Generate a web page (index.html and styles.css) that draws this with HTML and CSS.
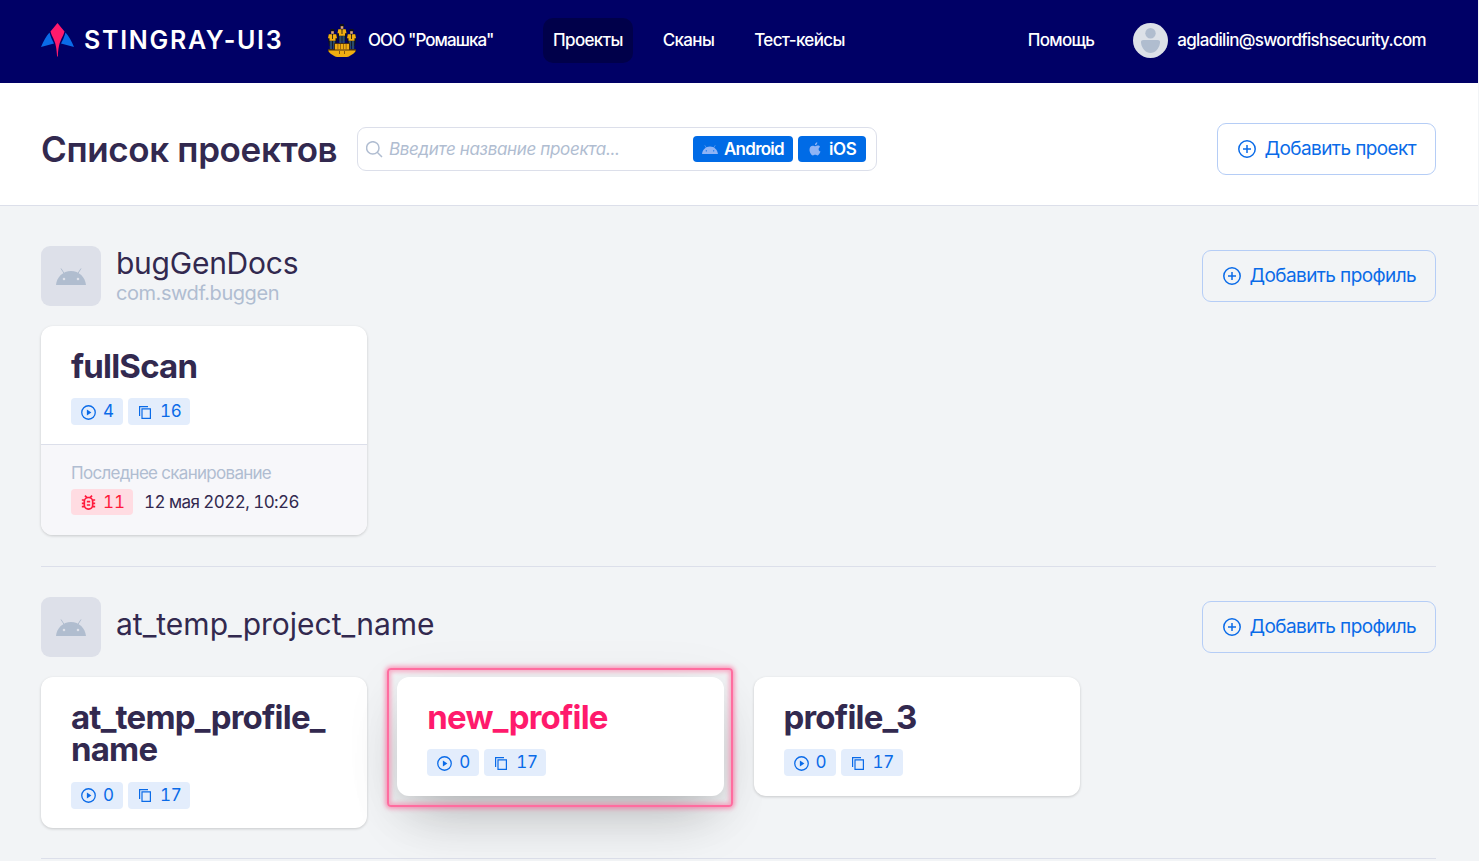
FILE: index.html
```html
<!DOCTYPE html>
<html lang="ru">
<head>
<meta charset="utf-8">
<title>Stingray — Проекты</title>
<link rel="stylesheet" href="styles.css">
</head>
<body>
<svg class="sprite" aria-hidden="true">
  <symbol id="droid" viewBox="0 0 30 17">
    <path d="M5 .5 8.500 6M25 .5 21.500 6" stroke="currentColor" stroke-width="1" fill="none"/>
    <path fill="currentColor" fill-rule="evenodd" d="M0 17C.6 9.300 7 3 15 3s14.400 6.300 15 14ZM8 9.700a1.300 1.300 0 1 0 0 2.600 1.300 1.300 0 0 0 0-2.600Zm14 0a1.300 1.300 0 1 0 0 2.600 1.300 1.300 0 0 0 0-2.600Z"/>
  </symbol>
  <symbol id="plus" viewBox="0 0 18 18">
    <path d="M9 5v8M5 9h8" stroke="currentColor" stroke-width="1.500" fill="none"/>
    <circle cx="9" cy="9" r="8.200" stroke="currentColor" stroke-width="1.500" fill="none"/>
  </symbol>
  <symbol id="play" viewBox="0 0 14 14">
    <circle cx="7" cy="7" r="6.300" stroke="currentColor" stroke-width="1.200" fill="none"/>
    <path d="M5.500 4.200v5.600L9.700 7Z" fill="currentColor"/>
  </symbol>
  <symbol id="copy" viewBox="0 0 12 13">
    <path d="M.6 10V.6H9M3 2.900h8.400v9.500H3Z" stroke="currentColor" stroke-width="1.200" fill="none"/>
  </symbol>
  <symbol id="bug" viewBox="3 3 18 18">
    <path fill="currentColor" d="M20 8h-2.810c-.45-.78-1.070-1.450-1.820-1.960L17 4.410 15.590 3l-2.170 2.170a6 6 0 0 0-2.830 0L8.410 3 7 4.410l1.620 1.630C7.880 6.550 7.260 7.220 6.810 8H4v2h2.090c-.05.33-.09.66-.09 1v1H4v2h2v1c0 .34.04.67.09 1H4v2h2.810a6 6 0 0 0 10.380 0H20v-2h-2.090c.05-.33.09-.66.09-1v-1h2v-2h-2v-1c0-.34-.04-.67-.09-1H20V8Zm-4 4v3a4 4 0 0 1-8 0v-4a4 4 0 0 1 8 0v1Zm-6 2h4v2h-4v-2Zm0-4h4v2h-4v-2Z"/>
  </symbol>
</svg>

<header class="topbar">
  <a class="brand">
    <svg width="33" height="34" viewBox="0 0 33 34">
      <path fill="#ff1a6c" d="M16.500 0 23.500 8.500C21.500 16 17.500 17 16.900 33.500h-.8C15.500 17 11.500 16 9.500 8.500Z"/>
      <path fill="#0a6be8" d="M8.500 9.500C10 15 11.500 17.500 13 20.500L0 24C2.500 18 5 13.500 8.500 9.500ZM24.500 9.500C23 15 21.500 17.500 20 20.500L33 24C30.500 18 28 13.500 24.500 9.500Z"/>
    </svg>
    <span class="brand-name">STINGRAY-UI3</span>
  </a>
  <a class="company">
    <svg width="28" height="33" viewBox="0 0 28 33">
      <defs><g id="worker">
        <path fill="#101018" d="M2.500 0h4v3.500h-4ZM.5 5h8L9 9.500 8 17H1L0 9.500Z"/>
        <path fill="#e0a878" d="M3.200 2.200h2.600v2.600H3.200Z"/>
        <path fill="#f2ad12" d="M.8 5.200h3l.7 1.200.7-1.200h3L9 9.300H7.500v2.500h-6V9.300H0Z"/>
        <path fill="#101018" d="M4.100 6h.8v4h-.8Z"/>
        <path fill="#2b4a68" d="M1.800 12h2.300v9H1.800ZM4.900 12h2.300v9H4.900Z"/>
      </g></defs>
      <use href="#worker" x="0" y="5"/><use href="#worker" x="19" y="5"/><use href="#worker" x="9.500"/>
      <path fill="#4a3010" d="M6 19h16v6h6v3H0v-3h6Z"/>
      <path fill="#f0ae12" d="M7 20h14v5.500H7ZM.5 26.500h27c-.5 3-4 4-6.500 6L19 33H9l-2-.5c-2.500-2-6-3-6.500-6Z"/>
      <path fill="#8a5710" d="M9.500 20h.8v5.500h-.8ZM12 20h.8v5.500H12ZM15.200 20h.8v5.500h-.8ZM17.700 20h.8v5.500h-.8ZM11 27h1v3h-1ZM16 27h1v3h-1Z"/>
    </svg>
    <span class="company-name">ООО "Ромашка"</span>
  </a>
  <nav class="menu">
    <a class="active">Проекты</a><a>Сканы</a><a>Тест-кейсы</a>
  </nav>
  <a class="help">Помощь</a>
  <a class="user">
    <svg width="35" height="35" viewBox="0 0 35 35">
      <circle cx="17.500" cy="17.500" r="17.500" fill="#dce1e8"/>
      <circle cx="17.500" cy="10.300" r="5.200" fill="#b0bdcf"/>
      <path fill="#b0bdcf" d="M10.500 17h14q3 0 2.500 3c-1 6-5 10-9.500 10S9 26 8 20q-.5-3 2.500-3Z"/>
    </svg>
    <span>agladilin@swordfishsecurity.com</span>
  </a>
</header>

<section class="toolbar">
  <h1>Список проектов</h1>
  <div class="search">
    <svg width="17" height="17" viewBox="0 0 17 17"><path d="M11.700 11.700 16 16M13 6.900a6.200 6.200 0 1 1-12.400 0 6.200 6.200 0 0 1 12.400 0Z" fill="none" stroke="#b0bdd1" stroke-width="1.500"/></svg>
    <span class="placeholder">Введите название проекта...</span>
    <span class="chip android"><svg width="16" height="9"><use href="#droid"/></svg><span>Android</span></span>
    <span class="chip ios"><svg width="12" height="14" viewBox="0 0 12 14"><path fill="currentColor" d="M8.300.3C8.400 2 7.200 3.300 5.900 3.300 5.800 1.800 7 .5 8.300.3ZM11 4.900c-2 1.200-1.700 3.800.5 4.700-.6 1.700-1.800 3.800-3 3.800-.9 0-1.200-.6-2.300-.6s-1.500.6-2.300.6C2.400 13.400.5 10.400.5 7.700c0-2.600 1.500-4 3.200-4 1.100 0 1.800.6 2.600.6.7 0 1.600-.7 2.800-.7.800 0 1.500.4 1.900 1.300Z"/></svg><span>iOS</span></span>
  </div>
  <button class="btn"><svg width="18" height="18"><use href="#plus"/></svg><span>Добавить проект</span></button>
</section>

<main>
  <section class="project">
    <div class="project-head">
      <span class="tile"><svg width="30" height="17"><use href="#droid"/></svg></span>
      <div class="names"><h2 class="tight">bugGenDocs</h2><p>com.swdf.buggen</p></div>
      <button class="btn"><svg width="18" height="18"><use href="#plus"/></svg><span>Добавить профиль</span></button>
    </div>
    <div class="cards">
      <article class="card">
        <div class="body with-scan">
          <h3>fullScan</h3>
          <div class="badges"><span class="badge"><svg width="15" height="15"><use href="#play"/></svg><span>4</span></span><span class="badge docs"><svg width="12" height="13"><use href="#copy"/></svg><span>16</span></span></div>
        </div>
        <div class="last">
          <p>Последнее сканирование</p>
          <div class="scan"><span class="badge red"><svg width="15" height="15"><use href="#bug"/></svg><span>11</span></span><time>12 мая 2022, 10:26</time></div>
        </div>
      </article>
    </div>
  </section>
  <section class="project">
    <div class="project-head">
      <span class="tile"><svg width="30" height="17"><use href="#droid"/></svg></span>
      <div class="names single"><h2>at_temp_project_name</h2></div>
      <button class="btn"><svg width="18" height="18"><use href="#plus"/></svg><span>Добавить профиль</span></button>
    </div>
    <div class="cards">
      <article class="card">
        <div class="body">
          <h3>at_temp_profile_<br>name</h3>
          <div class="badges"><span class="badge"><svg width="15" height="15"><use href="#play"/></svg><span>0</span></span><span class="badge docs"><svg width="12" height="13"><use href="#copy"/></svg><span>17</span></span></div>
        </div>
      </article>
      <article class="card hover">
        <div class="body">
          <h3>new_profile</h3>
          <div class="badges"><span class="badge"><svg width="15" height="15"><use href="#play"/></svg><span>0</span></span><span class="badge docs"><svg width="12" height="13"><use href="#copy"/></svg><span>17</span></span></div>
        </div>
        <span class="highlight"></span>
      </article>
      <article class="card">
        <div class="body">
          <h3>profile_3</h3>
          <div class="badges"><span class="badge"><svg width="15" height="15"><use href="#play"/></svg><span>0</span></span><span class="badge docs"><svg width="12" height="13"><use href="#copy"/></svg><span>17</span></span></div>
        </div>
      </article>
    </div>
  </section>
</main>
</body>
</html>
```
FILE: styles.css
```css
* { box-sizing: border-box; }
html { background: #f2f4f6; }
body {
  margin: 0 1px 0 0;
  height: 861px;
  overflow: hidden;
  font-family: Inter, "Liberation Sans", sans-serif;
  font-size: 17px;
  color: #32294f;
}
h1, h2, h3, p { margin: 0; font-weight: 400; }
.sprite { display: none; }
svg { display: block; flex: none; }
button { font: inherit; }

.topbar {
  display: flex;
  align-items: center;
  height: 83px;
  padding: 0 52px 3px 41px;
  background: #000066;
  color: #fff;
  font-weight: 500;
  letter-spacing: -0.7px;
  white-space: nowrap;
}
.brand, .company, .user { display: flex; align-items: center; }
.brand { width: 287px; gap: 10px; }
.brand-name { font-size: 25px; font-weight: 600; letter-spacing: 1.7px; }
.company { width: 215px; gap: 12px; }
.company-name { letter-spacing: -0.93px; }
.menu { display: flex; gap: 20px; letter-spacing: -0.64px; }
.menu a { height: 45px; line-height: 45px; padding: 0 10px; border-radius: 10px; }
.menu .active { background: #00004a; }
.help { margin-left: auto; }
.user { margin-left: 39px; gap: 9px; }

.toolbar {
  display: flex;
  align-items: center;
  height: 123px;
  padding: 10px 42px 0 41px;
  background: #fff;
  border-bottom: 1px solid #dcdfea;
}
h1 { width: 316px; font-size: 35px; font-weight: 600; letter-spacing: -0.36px; white-space: nowrap; }
.search {
  display: flex;
  align-items: center;
  width: 520px;
  height: 44px;
  padding: 0 10px 0 8px;
  border: 1px solid #dcdfea;
  border-radius: 9px;
}
.placeholder { flex: 1; margin-left: 6px; font-style: italic; color: #b0bdd1; letter-spacing: -0.34px; white-space: nowrap; }
.chip {
  display: flex;
  align-items: center;
  gap: 6px;
  width: 100px;
  height: 26px;
  padding-left: 9px;
  border-radius: 4px;
  background: #006be6;
  color: #fff;
  font-weight: 600;
  letter-spacing: -0.75px;
}
.chip svg { color: #8fb4f5; }
.ios { width: 68px; margin-left: 5px; padding-left: 11px; gap: 8px; letter-spacing: -0.4px; }
.btn {
  display: flex;
  align-items: center;
  gap: 9px;
  height: 52px;
  margin-left: auto;
  padding: 0 19px 1px 20px;
  border: 1px solid #b5cdf6;
  border-radius: 9px;
  background: none;
  color: #0a6be8;
  font-size: 19px;
  letter-spacing: -0.6px;
  white-space: nowrap;
}
.btn span { padding-bottom: 1px; }

main { padding: 0 42px 0 41px; }
.project { padding: 40px 0 31px; border-bottom: 1px solid #dcdfea; }
.project + .project { padding-top: 30px; padding-bottom: 30px; }
.project-head { display: flex; align-items: center; height: 60px; }
.tile { display: grid; place-items: center; width: 60px; height: 60px; border-radius: 9px; background: #dde0e9; color: #b0bdcf; }
.names { margin-left: 15px; }
.single { padding-bottom: 6px; }
h2 { font-size: 30px; line-height: 34px; }
.tight { line-height: 33px; padding-bottom: 1px; letter-spacing: -0.25px; }
.names p { font-size: 20px; line-height: 25px; letter-spacing: -0.44px; color: #b0bdd1; }
.cards { display: grid; grid-template-columns: repeat(4, 1fr); gap: 30px; align-items: start; margin-top: 20px; }
.card { position: relative; border-radius: 12px; background: #fff; box-shadow: 0 1px 3px rgba(0, 0, 0, .18); }
.body { min-height: 119px; padding: 23.5px 30px 19px; }
.with-scan { height: 118px; min-height: 0; }
h3 { font-size: 33px; line-height: 32.5px; font-weight: 700; letter-spacing: -0.8px; white-space: nowrap; }
.badges { display: flex; gap: 5px; margin-top: 16px; }
.badge {
  display: flex;
  align-items: center;
  gap: 7px;
  width: 52px;
  height: 27px;
  padding: 0 0 1px 10px;
  border-radius: 4px;
  background: #e3edfc;
  color: #0a6be8;
  font-variant-numeric: tabular-nums;
}
.badge svg { margin-top: 2px; }
.docs { width: 62px; padding-left: 11px; gap: 9px; letter-spacing: -0.3px; }
.last { height: 91px; padding: 17px 30px; border-top: 1px solid #dcdfea; border-radius: 0 0 12px 12px; background: #f7f7fa; }
.last p { line-height: 22px; letter-spacing: -0.72px; color: #b0bdd1; }
.scan { display: flex; align-items: center; gap: 11px; margin-top: 5px; }
.scan time { font-variant-numeric: tabular-nums; letter-spacing: -0.56px; }
.red { width: 62px; height: 26px; background: #ffdce2; color: #ff1a3c; }
.hover { box-shadow: 0 30px 55px -14px rgba(0, 0, 0, .22), 0 10px 60px rgba(0, 0, 0, .07), 0 3px 10px rgba(0, 0, 0, .04); }
.hover h3 { color: #ff1a6c; }
.highlight {
  position: absolute;
  inset: -9px -9px -11px -10px;
  border: 2px solid #ff6c9f;
  border-radius: 4px;
  box-shadow: 0 0 4px 2px rgba(255, 90, 145, .55), inset 0 0 4px 2px rgba(255, 90, 145, .45);
}
```
